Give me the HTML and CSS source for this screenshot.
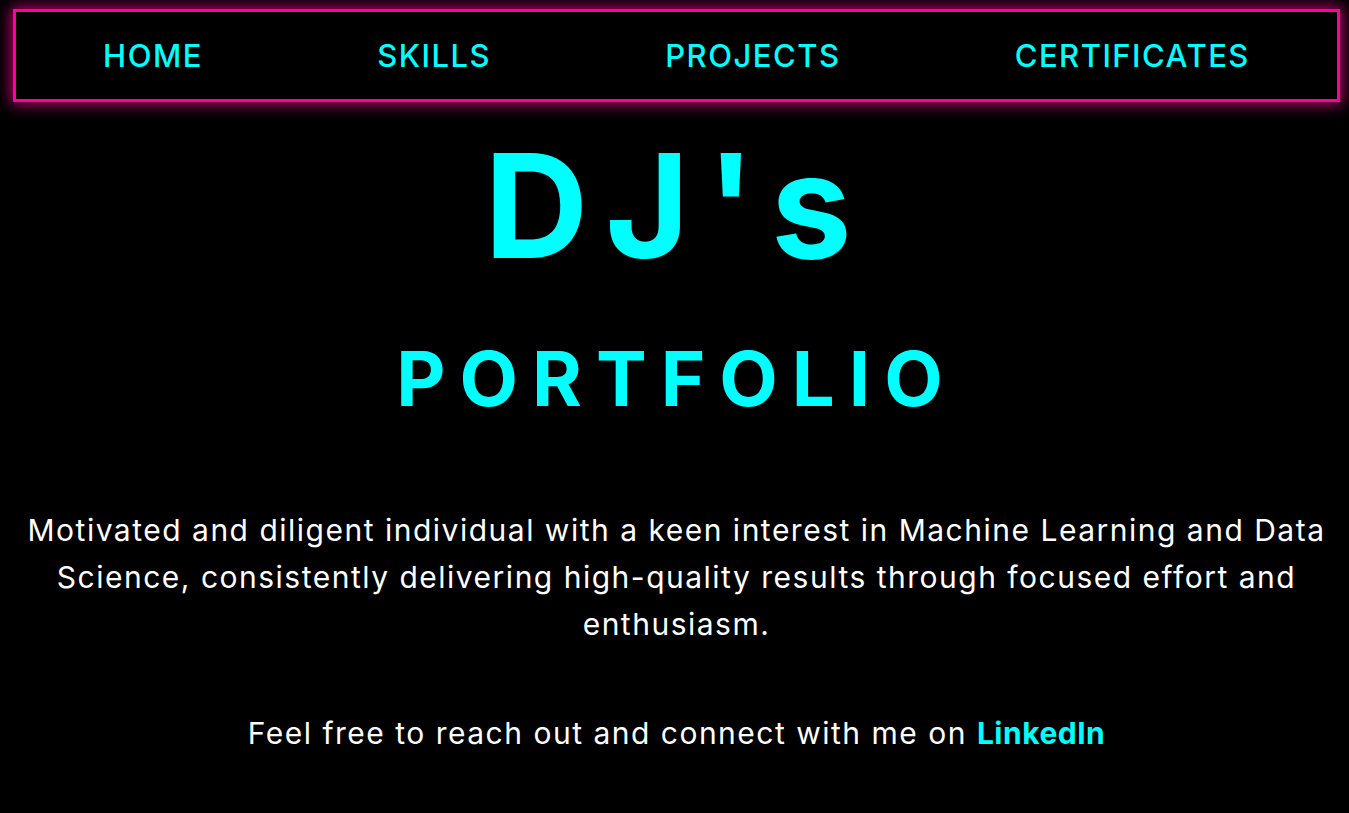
FILE: index.html
```html
<!DOCTYPE html>
<html lang="en">
<head>
  <meta charset="UTF-8">
  <meta name="viewport" content="width=device-width, initial-scale=1.0">
  <title>DJ's Portfolio</title>
  <link rel="stylesheet" href="styles.css">
</head>
<body>
<nav class="navbar">
  <ul class="nav-links">
    <li><a href="#home">HOME</a></li>
    <li><a href="#skills">SKILLS</a></li>
    <li><a href="#projects">PROJECTS</a></li>
    <li><a href="#certificates">CERTIFICATES</a></li>
  </ul>
</nav>

<section class="hero" id="home">
  <h1 class="hero-title">DJ's</h1>
  <h2 class="hero-subtitle">PORTFOLIO</h2>
  <p class="hero-text">Motivated and diligent individual with a keen interest in Machine Learning and Data Science, consistently delivering high-quality results through focused effort and enthusiasm.</p>
  <p class="hero-contact">Feel free to reach out and connect with me on <a href="#" class="linkedin">LinkedIn</a></p>
</section>
</body>
</html>
```

FILE: styles.css
```css
* {
  margin: 0;
  padding: 0;
  box-sizing: border-box;
}

body {
  background: #000;
  color: #fff;
  font-family: 'Inter', sans-serif;
  padding: 9px 9px 0 13px;
  overflow: hidden;
}

.navbar {
  border: 3px solid #ff0099;
  box-shadow: 0 0 14px 2px rgba(255, 0, 153, 0.75);
  height: 93px;
  display: flex;
  align-items: center;
}

.nav-links {
  list-style: none;
  display: flex;
  justify-content: space-around;
  width: 100%;
}

.nav-links a {
  color: #00ffff;
  text-decoration: none;
  font-size: 31px;
  font-weight: 500;
  letter-spacing: 1.5px;
}

.hero {
  text-align: center;
}

.hero-title {
  color: #00ffff;
  font-size: 144px;
  font-weight: 700;
  letter-spacing: 17px;
  line-height: 1;
  margin-top: 32px;
}

.hero-subtitle {
  color: #00ffff;
  font-size: 76px;
  font-weight: 700;
  letter-spacing: 14px;
  line-height: 1;
  margin-top: 62px;
}

.hero-text {
  font-size: 30px;
  line-height: 47px;
  letter-spacing: 1.5px;
  margin-top: 91px;
  padding: 0 10px;
}

.hero-contact {
  font-size: 30px;
  line-height: 47px;
  letter-spacing: 1.5px;
  margin-top: 62px;
}

.linkedin {
  color: #00ffff;
  font-weight: 700;
  letter-spacing: 0.5px;
  text-decoration: none;
}
```
